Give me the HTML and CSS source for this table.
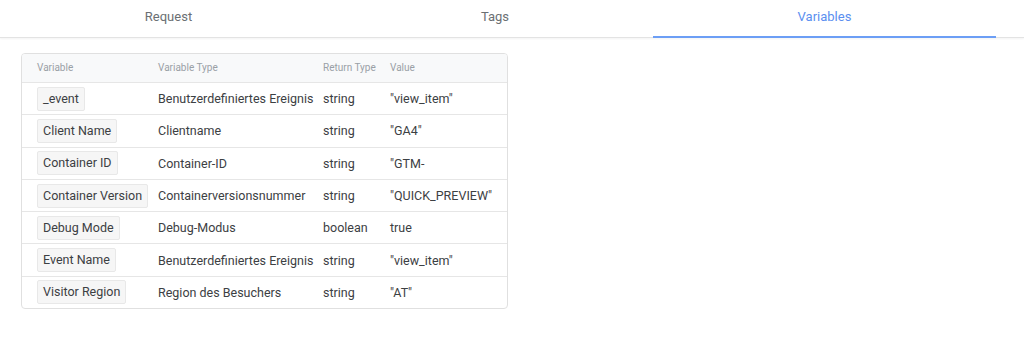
FILE: index.html
```html
<!DOCTYPE html>
<html lang="en">
<head>
  <meta charset="UTF-8">
  <title>Variables</title>
  <link rel="stylesheet" href="styles.css">
</head>
<body>
  <nav class="tab-bar">
    <div class="tab tab-request">Request</div>
    <div class="tab tab-tags">Tags</div>
    <div class="tab tab-variables active">Variables</div>
  </nav>
  <div class="var-table">
    <div class="row head">
      <div>Variable</div>
      <div>Variable Type</div>
      <div>Return Type</div>
      <div>Value</div>
    </div>
    <div class="row">
      <div><span class="chip">_event</span></div>
      <div>Benutzerdefiniertes Ereignis</div>
      <div>string</div>
      <div>"view_item"</div>
    </div>
    <div class="row">
      <div><span class="chip">Client Name</span></div>
      <div>Clientname</div>
      <div>string</div>
      <div>"GA4"</div>
    </div>
    <div class="row">
      <div><span class="chip">Container ID</span></div>
      <div>Container-ID</div>
      <div>string</div>
      <div>"GTM-</div>
    </div>
    <div class="row">
      <div><span class="chip">Container Version</span></div>
      <div>Containerversionsnummer</div>
      <div>string</div>
      <div>"QUICK_PREVIEW"</div>
    </div>
    <div class="row">
      <div><span class="chip">Debug Mode</span></div>
      <div>Debug-Modus</div>
      <div>boolean</div>
      <div>true</div>
    </div>
    <div class="row">
      <div><span class="chip">Event Name</span></div>
      <div>Benutzerdefiniertes Ereignis</div>
      <div>string</div>
      <div>"view_item"</div>
    </div>
    <div class="row">
      <div><span class="chip">Visitor Region</span></div>
      <div>Region des Besuchers</div>
      <div>string</div>
      <div>"AT"</div>
    </div>
  </div>
</body>
</html>
```

FILE: styles.css
```css
* {
  margin: 0;
  padding: 0;
  box-sizing: border-box;
  font-family: Roboto, 'Liberation Sans', sans-serif;
}
body {
  background: #fff;
  color: #3c4043;
}
.tab-bar {
  display: flex;
  height: 38px;
  border-bottom: 1px solid #e3e3e3;
  box-shadow: 0 1px 2px rgba(0, 0, 0, 0.05);
  padding-right: 28px;
}
.tab {
  display: flex;
  justify-content: center;
  align-items: center;
  font-size: 13px;
  color: #6b6f73;
  padding-bottom: 3px;
  border-bottom: 2px solid transparent;
  margin-bottom: -1px;
}
.tab-request {
  flex: 0 0 337px;
}
.tab-tags {
  flex: 0 0 316px;
}
.tab-variables {
  flex: 0 0 343px;
}
.tab.active {
  color: #5b8ff0;
  border-bottom-color: #6c9ef5;
}
.var-table {
  width: 487px;
  margin: 15px 0 0 21px;
  border: 1px solid #e0e0e0;
  border-radius: 4px;
  overflow: hidden;
}
.row {
  display: grid;
  grid-template-columns: 121px 165px 67px 1fr;
  align-items: center;
  height: 32.3px;
  padding-left: 15px;
  font-size: 12.5px;
  border-top: 1px solid #e6e6e6;
}
.row.head {
  height: 28px;
  border-top: none;
  background: #f8f9fa;
  font-size: 10px;
  color: #9aa0a6;
  padding-bottom: 1px;
}
.chip {
  display: inline-block;
  padding: 4px 5px;
  background: #f6f6f6;
  border: 1px solid #e8e8e8;
  border-radius: 2px;
  color: #3c4043;
  line-height: 14px;
}
```
